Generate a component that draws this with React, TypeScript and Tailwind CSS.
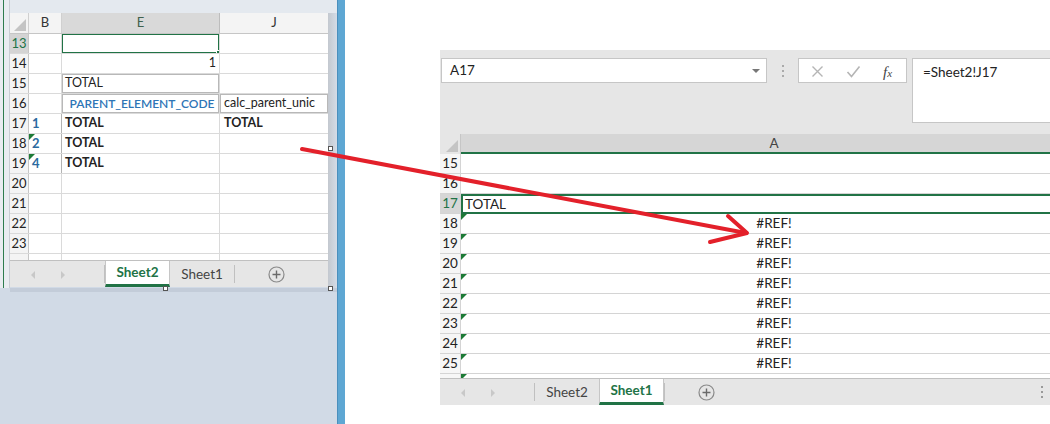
import React from "react";

const LEFT_ROWS = [13, 14, 15, 16, 17, 18, 19, 20, 21, 22, 23];
const RIGHT_ROWS = [15, 16, 17, 18, 19, 20, 21, 22, 23, 24, 25];

function ErrTri() {
  return (
    <span className="absolute left-0 top-0 h-0 w-0 border-t-[6px] border-r-[6px] border-t-[#1d7a36] border-r-transparent" />
  );
}

function CornerTri() {
  return (
    <span className="absolute right-[2px] bottom-[2px] h-0 w-0 border-b-[12px] border-l-[12px] border-b-[#c4c4c4] border-l-transparent" />
  );
}

function PlusCircle() {
  return (
    <svg width="17" height="17" viewBox="0 0 17 17">
      <circle cx="8.5" cy="8.5" r="7.5" fill="none" stroke="#8a8a8a" strokeWidth="1.2" />
      <path d="M8.5 4.5v8M4.5 8.5h8" stroke="#6a6a6a" strokeWidth="1.4" />
    </svg>
  );
}

function ScrollArrows() {
  return (
    <div className="relative w-[94px] h-full shrink-0">
      <span className="absolute left-[21px] top-[10px] h-0 w-0 border-y-[4px] border-r-[4px] border-y-transparent border-r-[#c8c8c8]" />
      <span className="absolute left-[51px] top-[10px] h-0 w-0 border-y-[4px] border-l-[4px] border-y-transparent border-l-[#c8c8c8]" />
    </div>
  );
}

function TabBar({ active }: { active: "Sheet1" | "Sheet2" }) {
  const tab = (name: string) =>
    name === active ? (
      <div className="w-[65px] shrink-0 h-full bg-white border-x border-[#c6c6c6] border-b-[3px] border-b-[#217346] flex items-center justify-center font-bold text-[#217346]">
        {name}
      </div>
    ) : (
      <div className="w-[64px] shrink-0 h-full flex items-center justify-center text-[#444]">{name}</div>
    );
  return (
    <div className="h-[27px] bg-[#e6e6e6] border-t border-[#c0c0c0] flex items-stretch text-[13.5px]">
      <ScrollArrows />
      <div className="w-px my-[4px] bg-[#c0c0c0]" />
      {tab("Sheet2")}
      {tab("Sheet1")}
      <div className="w-px my-[4px] bg-[#c0c0c0]" />
      <div className="ml-[33px] flex items-center">
        <PlusCircle />
      </div>
    </div>
  );
}

function LeftCell({
  w,
  children,
  className = "",
}: {
  w: string;
  children?: React.ReactNode;
  className?: string;
}) {
  return (
    <div className={`${w} shrink-0 relative h-full border-r border-[#dadada] flex items-center overflow-hidden whitespace-nowrap ${className}`}>
      {children}
    </div>
  );
}

function LeftWindow() {
  return (
    <div className="flex flex-col w-[318px] bg-white text-[12.5px]">
      <div className="flex h-[21px] bg-[#f4f4f4] border-b border-[#c6c6c6] text-[13px] text-[#333]">
        <div className="w-[19px] relative border-r border-[#d0d0d0]">
          <CornerTri />
        </div>
        <div className="w-[33px] border-r border-[#d0d0d0] flex items-center justify-center">B</div>
        <div className="w-[158px] bg-[#d9d9d9] border-r border-[#bdbdbd] flex items-center justify-center text-[#40614d]">E</div>
        <div className="w-[108px] flex items-center justify-center">J</div>
      </div>
      {LEFT_ROWS.map((r) => (
        <div key={r} className="flex h-[20px] border-b border-[#dadada] text-[#222]">
          <div
            className={`w-[19px] shrink-0 h-full border-r border-[#c6c6c6] flex items-center justify-center text-[13px] ${
              r === 13 ? "bg-[#d4d4d4] text-[#217346]" : "bg-[#f4f4f4]"
            }`}
          >
            {r}
          </div>
          <LeftCell
            w="w-[33px]"
            className={r >= 17 && r <= 19 ? "border-r-[#b3b3b3] pl-[3px] font-bold text-[13px] text-[#2b6aa0]" : ""}
          >
            {r === 17 && "1"}
            {r === 18 && (
              <>
                <ErrTri />2
              </>
            )}
            {r === 19 && (
              <>
                <ErrTri />4
              </>
            )}
          </LeftCell>
          <LeftCell
            w="w-[158px]"
            className={`pl-[3px] ${r === 15 || r === 16 ? "shadow-[inset_0_0_0_1px_#b8b8b8]" : ""} ${
              r >= 17 && r <= 19 ? "font-bold" : ""
            } ${r === 14 ? "justify-end pr-[3px]" : ""} ${r === 16 ? "justify-center" : ""}`}
          >
            {r === 13 && (
              <span className="absolute -left-px -top-px -right-px -bottom-px border-2 border-[#217346]">
                <span className="absolute -right-[4px] -bottom-[4px] w-[6px] h-[6px] bg-[#217346] border border-white" />
              </span>
            )}
            {r === 14 && "1"}
            {(r === 15 || (r >= 17 && r <= 19)) && "TOTAL"}
            {r === 16 && <span className="text-[#2e75b6] font-semibold text-[12px]">PARENT_ELEMENT_CODE</span>}
          </LeftCell>
          <LeftCell
            w="w-[108px]"
            className={`pl-[4px] border-r-0 ${r === 16 ? "shadow-[inset_0_0_0_1px_#b8b8b8]" : ""} ${
              r === 17 ? "font-bold" : ""
            }`}
          >
            {r === 16 && "calc_parent_unic"}
            {r === 17 && "TOTAL"}
          </LeftCell>
        </div>
      ))}
      <div className="flex h-[6px]">
        <div className="w-[19px] bg-[#f4f4f4] border-r border-[#c6c6c6]" />
        <div className="w-[33px] border-r border-[#dadada]" />
        <div className="w-[158px] border-r border-[#dadada]" />
      </div>
      <TabBar active="Sheet2" />
    </div>
  );
}

function LeftPanel() {
  return (
    <div className="w-[337px] shrink-0 h-full bg-[#d1dae6] flex flex-col">
      <div className="flex h-[288px]">
        <div className="w-[10px] shrink-0 bg-[#e9edf1] relative border-r border-[#c9ced4]">
          <div className="absolute left-[3px] top-0 bottom-0 w-px bg-[#2e7d4f]" />
        </div>
        <div className="flex flex-col w-[318px] shrink-0">
          <div className="h-[13px] bg-[#e4e9ef]" />
          <LeftWindow />
        </div>
        <div className="w-[9px] shrink-0 flex flex-col">
          <div className="h-[13px] bg-[#e4e9ef]" />
          <div className="flex-1 bg-gradient-to-r from-[#c3c8cf] to-[#d4dce7]" />
        </div>
      </div>
      <div className="h-[4px] ml-[10px] bg-[#c3ccd9]" />
    </div>
  );
}

function FormulaBar() {
  return (
    <div className="h-[84px] bg-[#e6e6e6] flex items-start pt-[8px] pl-px text-[13.5px] text-[#222]">
      <div className="w-[326px] shrink-0 h-[25px] bg-white border border-[#c6c6c6] flex items-center justify-between pl-[8px] pr-[6px]">
        <span>A17</span>
        <span className="h-0 w-0 border-x-[4px] border-t-[4px] border-x-transparent border-t-[#777]" />
      </div>
      <div className="w-[31px] shrink-0 h-[25px] flex flex-col items-center justify-center gap-[3px]">
        <span className="w-[2px] h-[2px] bg-[#aaa]" />
        <span className="w-[2px] h-[2px] bg-[#aaa]" />
        <span className="w-[2px] h-[2px] bg-[#aaa]" />
      </div>
      <div className="w-[109px] shrink-0 h-[25px] bg-white border border-[#c6c6c6] relative">
        <svg className="absolute left-[12px] top-[6px]" width="13" height="13" viewBox="0 0 13 13">
          <path d="M1.5 1.5l10 10M11.5 1.5l-10 10" stroke="#b5b5b5" strokeWidth="1.4" />
        </svg>
        <svg className="absolute left-[47px] top-[6px]" width="15" height="13" viewBox="0 0 15 13">
          <path d="M1.5 7l4 4.5L13.5 1.5" stroke="#b5b5b5" strokeWidth="1.6" fill="none" />
        </svg>
        <span className="absolute left-[84px] top-[2px] italic font-['Liberation_Serif',serif] text-[15px] text-[#444]">
          f<span className="text-[11px]">x</span>
        </span>
      </div>
      <div className="ml-[5px] flex-1 min-w-0 h-[65px] bg-white border border-r-0 border-[#c6c6c6] pl-[10px] pt-[3px] whitespace-nowrap">
        =Sheet2!J17
      </div>
    </div>
  );
}

function RightGrid() {
  return (
    <div className="flex flex-col text-[13.5px] text-[#222]">
      <div className="flex h-[20px]">
        <div className="w-[21px] shrink-0 bg-[#e6e6e6] relative border-r border-[#c6c6c6]">
          <CornerTri />
        </div>
        <div className="flex-1 min-w-0 overflow-hidden bg-[#d6d6d6] border-b-2 border-[#217346]">
          <div className="w-[626px] text-center leading-[18px] text-[#444]">A</div>
        </div>
      </div>
      {RIGHT_ROWS.map((r) => (
        <div key={r} className="flex h-[20px]">
          <div
            className={`w-[21px] shrink-0 h-full border-r border-b border-[#d4d4d4] flex items-center justify-center ${
              r === 17 ? "bg-[#d6d6d6] text-[#217346]" : "bg-[#f6f6f6]"
            }`}
          >
            {r}
          </div>
          <div
            className={`flex-1 min-w-0 h-full relative overflow-hidden ${
              r === 17 ? "border-y-2 border-l-2 border-[#217346]" : "border-b border-[#d4d4d4]"
            }`}
          >
            {r >= 18 && <ErrTri />}
            <div className="w-[626px] h-full flex items-center justify-center">
              {r === 17 && <span className="mr-auto pl-[2px]">TOTAL</span>}
              {r >= 18 && "#REF!"}
            </div>
          </div>
        </div>
      ))}
      <div className="flex h-[4px]">
        <div className="w-[21px] shrink-0 bg-[#f6f6f6] border-r border-[#d4d4d4]" />
        <div className="flex-1 relative">
          <ErrTri />
        </div>
      </div>
    </div>
  );
}

function RightPanel() {
  return (
    <div className="flex-1 min-w-0 h-full bg-white pl-[95px] pt-[50px]">
      <FormulaBar />
      <RightGrid />
      <div className="relative">
        <TabBar active="Sheet1" />
        <div className="absolute right-[7px] top-[8px] flex flex-col gap-[3px]">
          <span className="w-[2px] h-[2px] bg-[#999]" />
          <span className="w-[2px] h-[2px] bg-[#999]" />
          <span className="w-[2px] h-[2px] bg-[#999]" />
        </div>
      </div>
    </div>
  );
}

export default function App() {
  return (
    <div className="relative w-[1050px] h-[424px] overflow-hidden flex bg-white font-[Lato,sans-serif]">
      <LeftPanel />
      <div className="w-[8px] shrink-0 h-full bg-[#5ea7d3] border-l border-[#4a8fbd]" />
      <RightPanel />

      {/* selection handles of the pasted picture */}
      <span className="absolute left-[328px] top-[146px] w-[5px] h-[5px] bg-white border border-[#555]" />
      <span className="absolute left-[328px] top-[286px] w-[5px] h-[5px] bg-white border border-[#555]" />
      <span className="absolute left-[163px] top-[286px] w-[5px] h-[5px] bg-white border border-[#555]" />

      <svg className="absolute left-0 top-0 pointer-events-none" width="1050" height="424" viewBox="0 0 1050 424">
        <g stroke="#e3202a" strokeWidth="4" strokeLinecap="round" fill="none">
          <path d="M302 149L746 233" />
          <path d="M728 216L747 233L710 242" strokeLinejoin="round" />
        </g>
      </svg>
    </div>
  );
}
